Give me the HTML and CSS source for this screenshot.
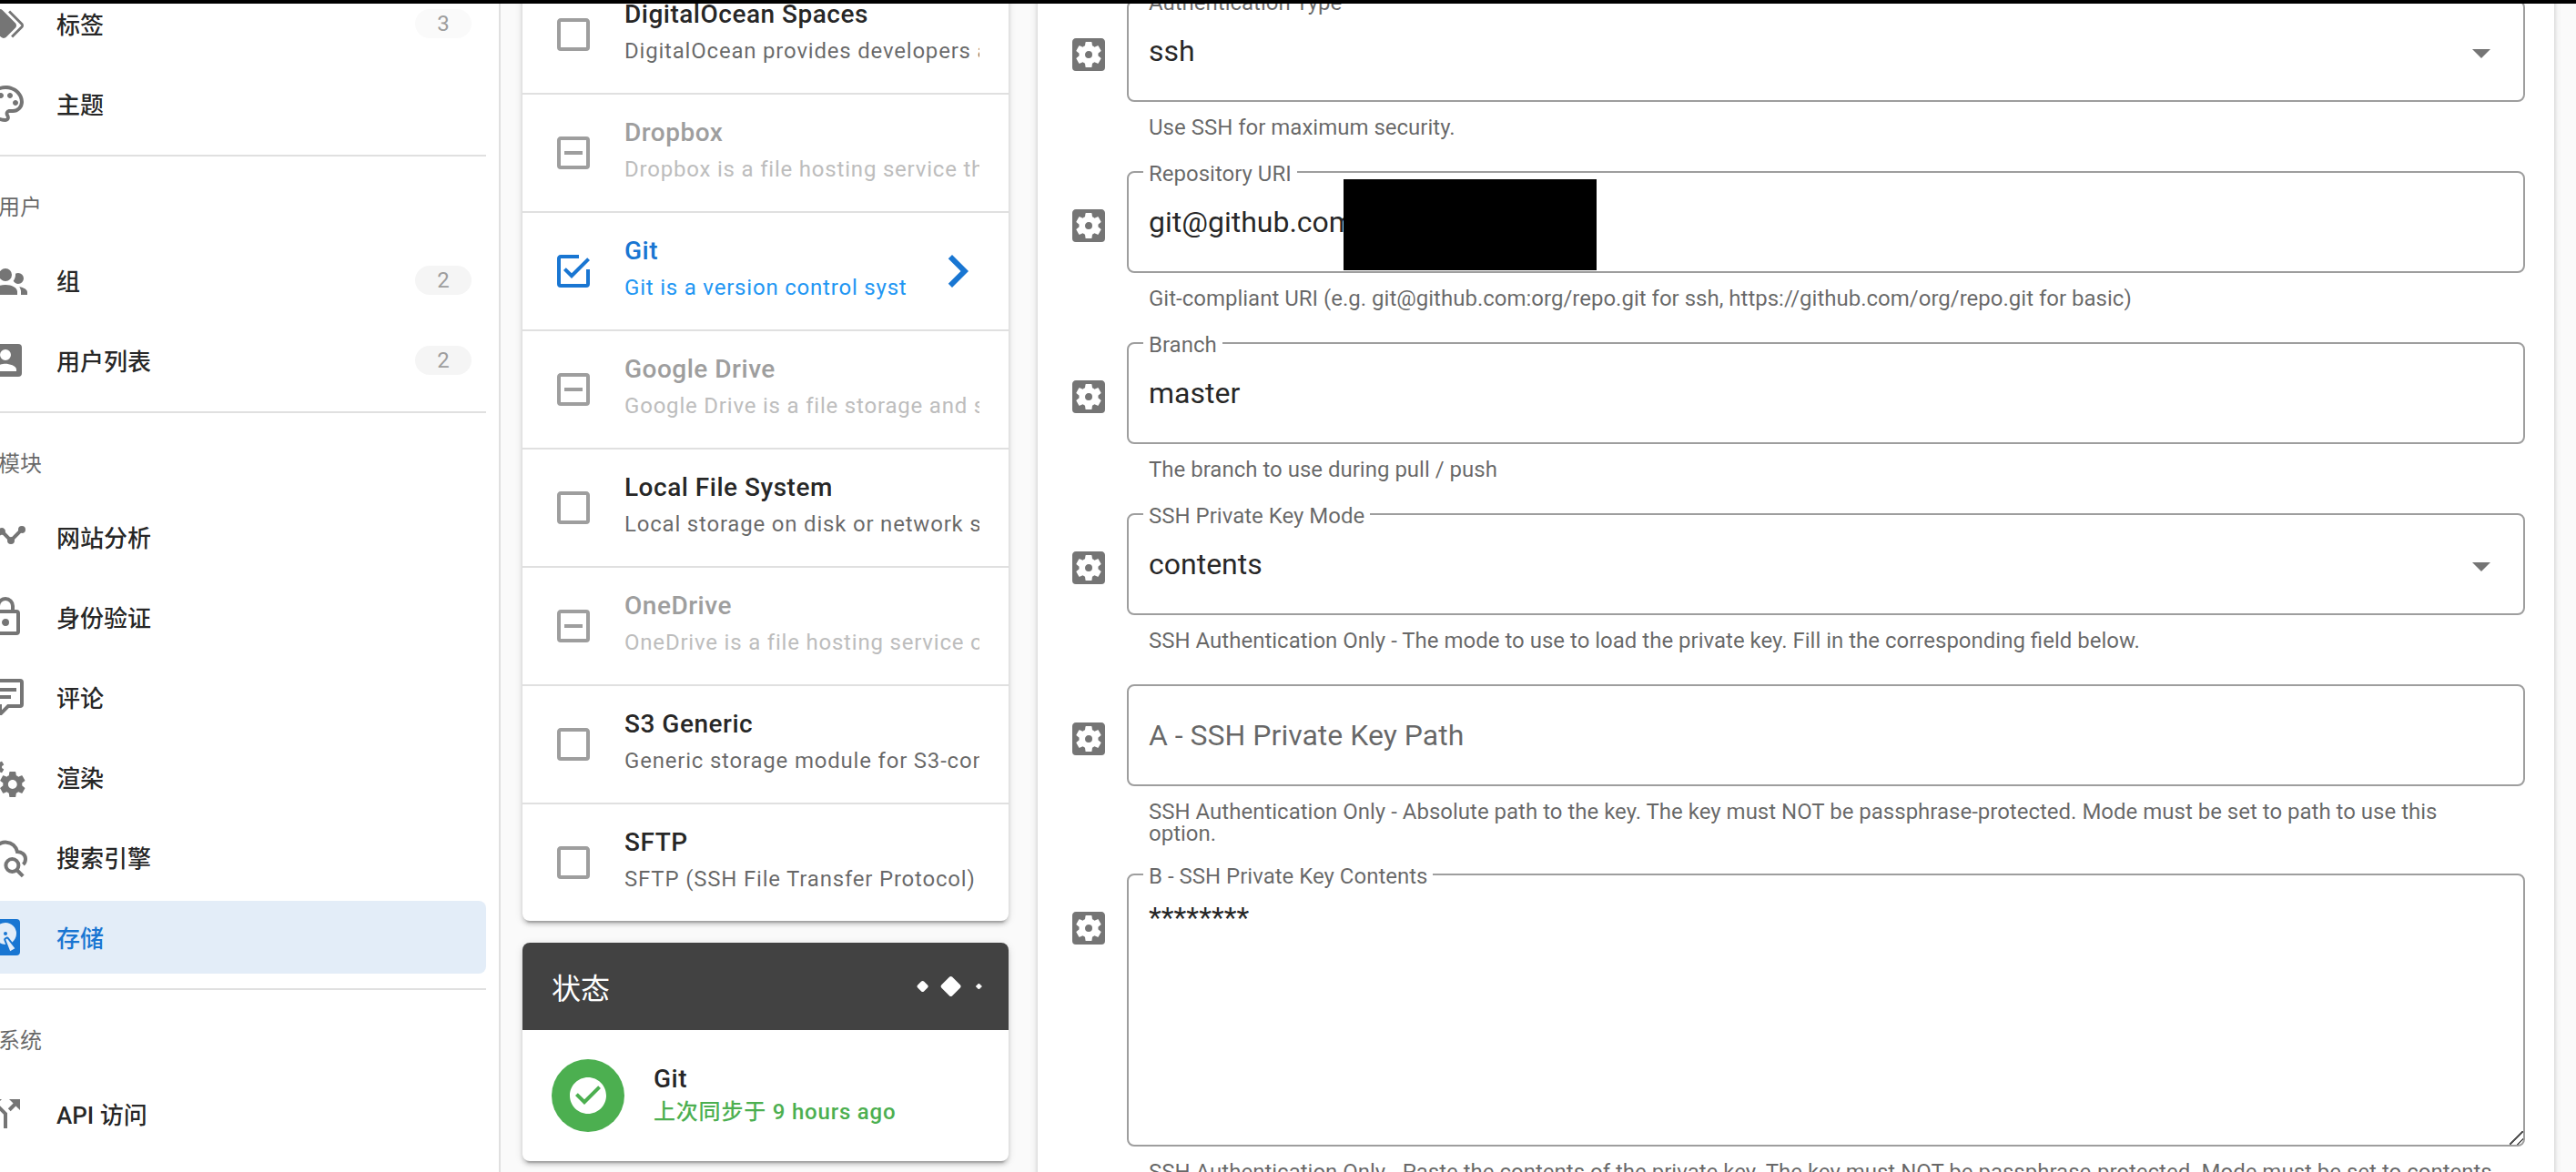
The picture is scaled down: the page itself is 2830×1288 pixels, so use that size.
FILE: index.html
```html
<!DOCTYPE html>
<html lang="zh">
<head>
<meta charset="utf-8">
<title>存储</title>
<meta name="viewport" content="width=device-width, initial-scale=1">
<link rel="stylesheet" href="styles.css">
</head>
<body>
<svg class="sprite" aria-hidden="true">
  <symbol id="i-cog-box" viewBox="0 0 24 24"><path d="M17.25,12C17.25,12.23 17.23,12.46 17.2,12.68L18.68,13.84C18.81,13.95 18.85,14.13 18.76,14.29L17.36,16.71C17.27,16.86 17.09,16.92 16.93,16.86L15.19,16.16C14.83,16.44 14.43,16.67 14,16.85L13.75,18.7C13.72,18.87 13.57,19 13.4,19H10.6C10.43,19 10.28,18.87 10.25,18.7L10,16.85C9.56,16.67 9.17,16.44 8.81,16.16L7.07,16.86C6.91,16.92 6.73,16.86 6.64,16.71L5.24,14.29C5.15,14.13 5.19,13.95 5.32,13.84L6.8,12.68C6.77,12.46 6.75,12.23 6.75,12C6.75,11.77 6.77,11.54 6.8,11.32L5.32,10.16C5.19,10.05 5.15,9.86 5.24,9.71L6.64,7.29C6.73,7.13 6.91,7.07 7.07,7.13L8.81,7.84C9.17,7.56 9.56,7.32 10,7.15L10.25,5.29C10.28,5.13 10.43,5 10.6,5H13.4C13.57,5 13.72,5.13 13.75,5.29L14,7.15C14.43,7.32 14.83,7.56 15.19,7.84L16.93,7.13C17.09,7.07 17.27,7.13 17.36,7.29L18.76,9.71C18.85,9.86 18.81,10.05 18.68,10.16L17.2,11.32C17.23,11.54 17.25,11.77 17.25,12M19,3H5C3.89,3 3,3.89 3,5V19A2,2 0 0,0 5,21H19A2,2 0 0,0 21,19V5C21,3.89 20.1,3 19,3M12,10C10.89,10 10,10.89 10,12A2,2 0 0,0 12,14A2,2 0 0,0 14,12A2,2 0 0,0 12,10Z"/></symbol>
  <symbol id="i-box" viewBox="0 0 24 24"><path d="M19,3H5C3.89,3 3,3.89 3,5V19A2,2 0 0,0 5,21H19A2,2 0 0,0 21,19V5C21,3.89 20.1,3 19,3M19,5V19H5V5H19Z"/></symbol>
  <symbol id="i-minus" viewBox="0 0 24 24"><path d="M19,19V5H5V19H19M19,3A2,2 0 0,1 21,5V19A2,2 0 0,1 19,21H5A2,2 0 0,1 3,19V5C3,3.89 3.9,3 5,3H19M17,11V13H7V11H17Z"/></symbol>
  <symbol id="i-checked" viewBox="0 0 24 24"><path d="M19,19H5V5H15V3H5C3.89,3 3,3.89 3,5V19A2,2 0 0,0 5,21H19A2,2 0 0,0 21,19V11H19M7.91,10.08L6.5,11.5L11,16L21,6L19.59,4.58L11,13.17L7.91,10.08Z"/></symbol>
  <symbol id="i-menu-down" viewBox="0 0 24 24"><path d="M7,10L12,15L17,10H7Z"/></symbol>
</svg>

<div class="progress"></div>

<div class="app">
  <nav class="sidebar">
    <ul class="nav">
      <li><a class="nav-item" href="#tags">
        <svg class="icon" viewBox="0 0 24 24"><path d="M5.5,9A1.5,1.5 0 0,0 7,7.5A1.5,1.5 0 0,0 5.5,6A1.5,1.5 0 0,0 4,7.5A1.5,1.5 0 0,0 5.5,9M17.41,11.58C17.77,11.94 18,12.44 18,13C18,13.55 17.78,14.05 17.41,14.41L12.41,19.41C12.05,19.77 11.55,20 11,20C10.45,20 9.95,19.78 9.58,19.41L2.59,12.42C2.22,12.05 2,11.55 2,11V6C2,4.89 2.89,4 4,4H9C9.55,4 10.05,4.22 10.41,4.58L17.41,11.58M13.54,5.71L14.54,4.71L21.41,11.58C21.78,11.94 22,12.45 22,13C22,13.55 21.78,14.05 21.42,14.41L16.04,19.79L15.04,18.79L20.75,13L13.54,5.71Z"/></svg>
        <span class="nav-text">标签</span><span class="chip chip-light">3</span></a></li>
      <li><a class="nav-item" href="#theme">
        <svg class="icon" viewBox="0 0 24 24"><path d="M12,22A10,10 0 0,1 2,12A10,10 0 0,1 12,2C17.5,2 22,6 22,11A6,6 0 0,1 16,17H14.2C13.9,17 13.7,17.2 13.7,17.5C13.7,17.6 13.8,17.7 13.8,17.8C14.2,18.3 14.4,18.9 14.4,19.5C14.5,20.9 13.4,22 12,22M12,4A8,8 0 0,0 4,12A8,8 0 0,0 12,20C12.3,20 12.5,19.8 12.5,19.5C12.5,19.3 12.4,19.2 12.4,19.1C12,18.6 11.8,18.1 11.8,17.5C11.8,16.1 12.9,15 14.3,15H16A4,4 0 0,0 20,11C20,7.1 16.4,4 12,4M6.5,10C7.3,10 8,10.7 8,11.5C8,12.3 7.3,13 6.5,13C5.7,13 5,12.3 5,11.5C5,10.7 5.7,10 6.5,10M9.5,6C10.3,6 11,6.7 11,7.5C11,8.3 10.3,9 9.5,9C8.7,9 8,8.3 8,7.5C8,6.7 8.7,6 9.5,6M14.5,6C15.3,6 16,6.7 16,7.5C16,8.3 15.3,9 14.5,9C13.7,9 13,8.3 13,7.5C13,6.7 13.7,6 14.5,6M17.5,10C18.3,10 19,10.7 19,11.5C19,12.3 18.3,13 17.5,13C16.7,13 16,12.3 16,11.5C16,10.7 16.7,10 17.5,10Z"/></svg>
        <span class="nav-text">主题</span></a></li>
    </ul>
    <h2 class="subheader">用户</h2>
    <ul class="nav">
      <li><a class="nav-item" href="#groups">
        <svg class="icon" viewBox="0 0 24 24"><path d="M12,5.5A3.5,3.5 0 0,1 15.5,9A3.5,3.5 0 0,1 12,12.5A3.5,3.5 0 0,1 8.5,9A3.5,3.5 0 0,1 12,5.5M5,8C5.56,8 6.08,8.15 6.53,8.42C6.38,9.85 6.8,11.27 7.66,12.38C7.16,13.34 6.16,14 5,14A3,3 0 0,1 2,11A3,3 0 0,1 5,8M19,8A3,3 0 0,1 22,11A3,3 0 0,1 19,14C17.84,14 16.84,13.34 16.34,12.38C17.2,11.27 17.62,9.85 17.47,8.42C17.92,8.15 18.44,8 19,8M5.5,18.25C5.5,16.18 8.41,14.5 12,14.5C15.59,14.5 18.5,16.18 18.5,18.25V20H5.5V18.25M0,20V18.5C0,17.11 1.89,15.94 4.45,15.6C3.86,16.28 3.5,17.22 3.5,18.25V20H0M24,20H20.5V18.25C20.5,17.22 20.14,16.28 19.55,15.6C22.11,15.94 24,17.11 24,18.5V20Z"/></svg>
        <span class="nav-text">组</span><span class="chip">2</span></a></li>
      <li><a class="nav-item" href="#users">
        <svg class="icon" viewBox="0 0 24 24"><path d="M6,17C6,15 10,13.9 12,13.9C14,13.9 18,15 18,17V18H6M15,9A3,3 0 0,1 12,12A3,3 0 0,1 9,9A3,3 0 0,1 12,6A3,3 0 0,1 15,9M3,5V19A2,2 0 0,0 5,21H19A2,2 0 0,0 21,19V5A2,2 0 0,0 19,3H5C3.89,3 3,3.9 3,5Z"/></svg>
        <span class="nav-text">用户列表</span><span class="chip">2</span></a></li>
    </ul>
    <h2 class="subheader">模块</h2>
    <ul class="nav">
      <li><a class="nav-item" href="#analytics">
        <svg class="icon" viewBox="0 0 24 24"><path d="M3,14L3.5,14.07L8.07,9.5C7.89,8.85 8.06,8.11 8.59,7.59C9.37,6.8 10.63,6.8 11.41,7.59C11.94,8.11 12.11,8.85 11.93,9.5L14.5,12.07L15,12C15.18,12 15.35,12 15.5,12.07L19.07,8.5C19,8.35 19,8.18 19,8A2,2 0 0,1 21,6A2,2 0 0,1 23,8A2,2 0 0,1 21,10C20.82,10 20.65,10 20.5,9.93L16.93,13.5C17,13.65 17,13.82 17,14A2,2 0 0,1 15,16A2,2 0 0,1 13,14L13.07,13.5L10.5,10.93C10.18,11 9.82,11 9.5,10.93L4.93,15.5L5,16A2,2 0 0,1 3,18A2,2 0 0,1 1,16A2,2 0 0,1 3,14Z"/></svg>
        <span class="nav-text">网站分析</span></a></li>
      <li><a class="nav-item" href="#auth">
        <svg class="icon" viewBox="0 0 24 24"><path d="M12,17C10.89,17 10,16.1 10,15C10,13.89 10.89,13 12,13A2,2 0 0,1 14,15A2,2 0 0,1 12,17M18,20V10H6V20H18M18,8A2,2 0 0,1 20,10V20A2,2 0 0,1 18,22H6C4.89,22 4,21.1 4,20V10C4,8.89 4.89,8 6,8H7V6A5,5 0 0,1 12,1A5,5 0 0,1 17,6V8H18M12,3A3,3 0 0,0 9,6V8H15V6A3,3 0 0,0 12,3Z"/></svg>
        <span class="nav-text">身份验证</span></a></li>
      <li><a class="nav-item" href="#comments">
        <svg class="icon" viewBox="0 0 24 24"><path d="M9,22A1,1 0 0,1 8,21V18H4A2,2 0 0,1 2,16V4C2,2.89 2.9,2 4,2H20A2,2 0 0,1 22,4V16A2,2 0 0,1 20,18H13.9L10.2,21.71C10,21.9 9.75,22 9.5,22V22H9M10,16V19.08L13.08,16H20V4H4V16H10M6,7H18V9H6V7M6,11H15V13H6V11Z"/></svg>
        <span class="nav-text">评论</span></a></li>
      <li><a class="nav-item" href="#rendering">
        <svg class="icon" viewBox="0 0 24 24"><path d="M15.9,18.45C17.25,18.45 18.35,17.35 18.35,16C18.35,14.65 17.25,13.55 15.9,13.55C14.54,13.55 13.45,14.65 13.45,16C13.45,17.35 14.54,18.45 15.9,18.45M21.1,16.68L22.58,17.84C22.71,17.95 22.75,18.13 22.66,18.29L21.26,20.71C21.17,20.86 21,20.92 20.83,20.86L19.09,20.16C18.73,20.44 18.33,20.67 17.91,20.85L17.64,22.7C17.62,22.87 17.47,23 17.3,23H14.5C14.32,23 14.18,22.87 14.15,22.7L13.89,20.85C13.46,20.67 13.07,20.44 12.71,20.16L10.96,20.86C10.81,20.92 10.62,20.86 10.54,20.71L9.14,18.29C9.05,18.13 9.09,17.95 9.22,17.84L10.7,16.68L10.65,16L10.7,15.31L9.22,14.16C9.09,14.05 9.05,13.86 9.14,13.71L10.54,11.29C10.62,11.13 10.81,11.07 10.96,11.13L12.71,11.84C13.07,11.56 13.46,11.32 13.89,11.15L14.15,9.29C14.18,9.13 14.32,9 14.5,9H17.3C17.47,9 17.62,9.13 17.64,9.29L17.91,11.15C18.33,11.32 18.73,11.56 19.09,11.84L20.83,11.13C21,11.07 21.17,11.13 21.26,11.29L22.66,13.71C22.75,13.86 22.71,14.05 22.58,14.16L21.1,15.31L21.15,16L21.1,16.68M6.69,8.07C7.56,8.07 8.26,7.37 8.26,6.5C8.26,5.63 7.56,4.92 6.69,4.92A1.58,1.58 0 0,0 5.11,6.5C5.11,7.37 5.82,8.07 6.69,8.07M10.03,6.94L11,7.68C11.07,7.75 11.09,7.87 11.03,7.97L10.13,9.53C10.08,9.63 9.96,9.67 9.86,9.63L8.74,9.18L8,9.62L7.81,10.81C7.79,10.92 7.7,11 7.59,11H5.79C5.67,11 5.58,10.92 5.56,10.81L5.4,9.62L4.64,9.18L3.52,9.63C3.41,9.67 3.3,9.63 3.24,9.53L2.34,7.97C2.28,7.87 2.31,7.75 2.39,7.68L3.34,6.94L3.31,6.5L3.34,6.06L2.39,5.32C2.31,5.25 2.28,5.13 2.34,5.03L3.24,3.47C3.3,3.37 3.41,3.33 3.52,3.37L4.63,3.82L5.4,3.38L5.56,2.19C5.58,2.08 5.67,2 5.79,2H7.59C7.7,2 7.79,2.08 7.81,2.19L8,3.38L8.74,3.82L9.86,3.37C9.96,3.33 10.08,3.37 10.13,3.47L11.03,5.03C11.09,5.13 11.07,5.25 11,5.32L10.03,6.06L10.06,6.5L10.03,6.94Z"/></svg>
        <span class="nav-text">渲染</span></a></li>
      <li><a class="nav-item" href="#search">
        <svg class="icon icon-line" viewBox="0 0 24 24"><path d="M9,17H6A4.5,4.5 0 0 1 5.9,8A6.6,6.6 0 0 1 18.5,9C21,9 23,10.8 23,13C23,14.3 22.5,15.3 21.7,16"/><circle cx="15.7" cy="16.5" r="3.5"/><path d="M18.2,19L21.6,22.4"/></svg>
        <span class="nav-text">搜索引擎</span></a></li>
      <li><a class="nav-item nav-item-active" href="#storage" aria-current="page">
        <svg class="icon" viewBox="0 0 24 24"><path d="M6,2H18A2,2 0 0,1 20,4V20A2,2 0 0,1 18,22H6A2,2 0 0,1 4,20V4A2,2 0 0,1 6,2M12,4A6,6 0 0,0 6,10C6,13.31 8.69,16 12.1,16L11.22,13.77C10.95,13.29 11.11,12.68 11.59,12.4L12.45,11.9C12.93,11.63 13.54,11.79 13.82,12.27L15.74,14.69C17.12,13.59 18,11.9 18,10A6,6 0 0,0 12,4M12,9A1,1 0 0,1 13,10A1,1 0 0,1 12,11A1,1 0 0,1 11,10A1,1 0 0,1 12,9M7,18A1,1 0 0,0 6,19A1,1 0 0,0 7,20A1,1 0 0,0 8,19A1,1 0 0,0 7,18M12.09,13.27L14.58,19.58L17.17,18.08L12.95,12.77L12.09,13.27Z"/></svg>
        <span class="nav-text">存储</span></a></li>
    </ul>
    <h2 class="subheader">系统</h2>
    <ul class="nav">
      <li><a class="nav-item" href="#api">
        <svg class="icon" viewBox="0 0 24 24"><path d="M14,4L16.29,6.29L13.41,9.17L14.83,10.59L17.71,7.71L20,10V4M10,4H4V10L6.29,7.71L11,12.41V20H13V11.59L7.71,6.29"/></svg>
        <span class="nav-text">API 访问</span></a></li>
    </ul>
  </nav>

  <main class="content">
    <div class="column">
      <ul class="card targets">
        <li class="target">
          <span class="check"><input type="checkbox" id="t-do"><svg class="icon"><use href="#i-box"/></svg></span>
          <div class="target-text"><label class="target-title" for="t-do">DigitalOcean Spaces</label><p class="target-desc">DigitalOcean provides developers and businesses a reliable, easy-to-use cloud computing platform.</p></div>
        </li>
        <li class="target target-disabled">
          <span class="check"><input type="checkbox" id="t-dropbox" disabled><svg class="icon"><use href="#i-minus"/></svg></span>
          <div class="target-text"><label class="target-title" for="t-dropbox">Dropbox</label><p class="target-desc">Dropbox is a file hosting service that offers cloud storage and file synchronization.</p></div>
        </li>
        <li class="target target-active">
          <span class="check"><input type="checkbox" id="t-git" checked><svg class="icon"><use href="#i-checked"/></svg></span>
          <div class="target-text"><label class="target-title" for="t-git">Git</label><p class="target-desc">Git is a version control system for tracking changes in computer files.</p></div>
          <span class="chevron"><svg viewBox="0 0 24 24"><path d="M8.59,16.58L13.17,12L8.59,7.41L10,6L16,12L10,18L8.59,16.58Z"/></svg></span>
        </li>
        <li class="target target-disabled">
          <span class="check"><input type="checkbox" id="t-gdrive" disabled><svg class="icon"><use href="#i-minus"/></svg></span>
          <div class="target-text"><label class="target-title" for="t-gdrive">Google Drive</label><p class="target-desc">Google Drive is a file storage and synchronization service developed by Google.</p></div>
        </li>
        <li class="target">
          <span class="check"><input type="checkbox" id="t-local"><svg class="icon"><use href="#i-box"/></svg></span>
          <div class="target-text"><label class="target-title" for="t-local">Local File System</label><p class="target-desc">Local storage on disk or network shares.</p></div>
        </li>
        <li class="target target-disabled">
          <span class="check"><input type="checkbox" id="t-onedrive" disabled><svg class="icon"><use href="#i-minus"/></svg></span>
          <div class="target-text"><label class="target-title" for="t-onedrive">OneDrive</label><p class="target-desc">OneDrive is a file hosting service operated by Microsoft.</p></div>
        </li>
        <li class="target">
          <span class="check"><input type="checkbox" id="t-s3"><svg class="icon"><use href="#i-box"/></svg></span>
          <div class="target-text"><label class="target-title" for="t-s3">S3 Generic</label><p class="target-desc">Generic storage module for S3-compatible services.</p></div>
        </li>
        <li class="target">
          <span class="check"><input type="checkbox" id="t-sftp"><svg class="icon"><use href="#i-box"/></svg></span>
          <div class="target-text"><label class="target-title" for="t-sftp">SFTP</label><p class="target-desc">SFTP (SSH File Transfer Protocol)</p></div>
        </li>
      </ul>

      <section class="card">
        <header class="status-header">
          <h2 class="status-heading">状态</h2>
          <svg class="spinner" viewBox="0 0 72 24"><g stroke-width="4" stroke-linejoin="round"><path d="M9.6,8L13.6,12L9.6,16L5.6,12Z"/><path d="M40.6,3L49.6,12L40.6,21L31.6,12Z"/></g><path d="M71.4,9L74.4,12L71.4,15L68.4,12Z"/></svg>
        </header>
        <div class="status-row">
          <span class="avatar"><svg class="icon" viewBox="0 0 24 24"><path d="M12 2C6.5 2 2 6.5 2 12S6.5 22 12 22 22 17.5 22 12 17.5 2 12 2M10 17L5 12L6.41 10.59L10 14.17L17.59 6.58L19 8L10 17Z"/></svg></span>
          <div><h3 class="status-title">Git</h3><p class="status-desc">上次同步于 9 hours ago</p></div>
        </div>
      </section>
    </div>

    <form class="card form">
      <div class="row">
        <svg class="icon row-icon"><use href="#i-cog-box"/></svg>
        <div class="row-main">
          <div class="field"><label class="field-label" for="f-auth">Authentication Type</label>
            <select class="control" id="f-auth"><option>ssh</option><option>basic</option></select>
            <svg class="icon arrow"><use href="#i-menu-down"/></svg></div>
          <p class="hint">Use SSH for maximum security.</p>
        </div>
      </div>
      <div class="row">
        <svg class="icon row-icon"><use href="#i-cog-box"/></svg>
        <div class="row-main">
          <div class="field"><label class="field-label" for="f-uri">Repository URI</label>
            <input class="control" id="f-uri" type="text" value="git@github.com">
            <span class="redaction"></span></div>
          <p class="hint">Git-compliant URI (e.g. git@github.com:org/repo.git for ssh, https://github.com/org/repo.git for basic)</p>
        </div>
      </div>
      <div class="row">
        <svg class="icon row-icon"><use href="#i-cog-box"/></svg>
        <div class="row-main">
          <div class="field"><label class="field-label" for="f-branch">Branch</label>
            <input class="control" id="f-branch" type="text" value="master"></div>
          <p class="hint">The branch to use during pull / push</p>
        </div>
      </div>
      <div class="row">
        <svg class="icon row-icon"><use href="#i-cog-box"/></svg>
        <div class="row-main">
          <div class="field"><label class="field-label" for="f-mode">SSH Private Key Mode</label>
            <select class="control" id="f-mode"><option>contents</option><option>path</option></select>
            <svg class="icon arrow"><use href="#i-menu-down"/></svg></div>
          <p class="hint">SSH Authentication Only - The mode to use to load the private key. Fill in the corresponding field below.</p>
        </div>
      </div>
      <div class="row">
        <svg class="icon row-icon"><use href="#i-cog-box"/></svg>
        <div class="row-main">
          <div class="field"><label class="field-label field-label-resting" for="f-path">A - SSH Private Key Path</label>
            <input class="control" id="f-path" type="text"></div>
          <p class="hint">SSH Authentication Only - Absolute path to the key. The key must NOT be passphrase-protected. Mode must be set to path to use this option.</p>
        </div>
      </div>
      <div class="row">
        <svg class="icon row-icon"><use href="#i-cog-box"/></svg>
        <div class="row-main">
          <div class="field field-tall"><label class="field-label" for="f-key">B - SSH Private Key Contents</label>
            <textarea class="control control-area" id="f-key">********</textarea></div>
          <p class="hint">SSH Authentication Only - Paste the contents of the private key. The key must NOT be passphrase-protected. Mode must be set to contents to use this option.</p>
        </div>
      </div>
    </form>
  </main>
</div>
</body>
</html>
```
FILE: styles.css
```css
* {
  box-sizing: border-box;
}

:root {
  --text: rgba(0, 0, 0, 0.87);
  --muted: rgba(0, 0, 0, 0.6);
  --icon: #757575;
  --line: #e0e0e0;
  --outline: #9e9e9e;
  --primary: #1976d2;
}

body {
  margin: 0;
  overflow: hidden;
  background: #fafafa;
  color: var(--text);
  font-family: Roboto, "Noto Sans CJK SC", sans-serif;
  font-size: 24px;
}

ul,
h2,
h3,
p {
  margin: 0;
  padding: 0;
  list-style: none;
  font-weight: 400;
}

.sprite {
  display: none;
}

.icon {
  flex: none;
  display: block;
  width: 48px;
  height: 48px;
  fill: currentColor;
}

.icon-line {
  fill: none;
  stroke: currentColor;
  stroke-width: 2;
}

.progress {
  position: fixed;
  inset: 0 0 auto;
  z-index: 2;
  height: 4px;
  background: #000;
}

.app {
  display: flex;
  height: 100vh;
  overflow: hidden;
}

/* Sidebar, scrolled slightly down and to the right */
.sidebar {
  flex: none;
  width: 550px;
  padding-right: 14px;
  overflow: hidden;
  border-right: 2px solid var(--line);
  background: #fff;
}

.nav {
  display: flex;
  flex-direction: column;
  gap: 8px;
  margin-left: -34px;
}

.nav:first-child {
  margin-top: -14px;
}

.nav-item {
  display: flex;
  align-items: center;
  gap: 32px;
  height: 80px;
  padding: 0 16px;
  border-radius: 8px;
  color: var(--icon);
  text-decoration: none;
}

.nav-text {
  flex: 1;
  padding-bottom: 2px;
  color: var(--text);
  font-size: 26px;
  font-weight: 500;
}

.nav-item-active {
  background: #e3edf8;
  color: var(--primary);
}

.nav-item-active .nav-text {
  color: inherit;
}

.chip {
  width: 62px;
  border-radius: 16px;
  background: #f5f5f5;
  color: #9e9e9e;
  line-height: 32px;
  text-align: center;
}

.chip-light {
  background: #fafafa;
}

.subheader {
  margin: 16px 0 0 -2px;
  padding-top: 16px;
  border-top: 2px solid var(--line);
  color: var(--muted);
  font-size: 24px;
  line-height: 80px;
}

/* Main area */
.content {
  flex: 1;
  display: grid;
  grid-template-columns: minmax(320px, 534px) minmax(0, 1fr);
  gap: 32px;
  align-items: start;
  min-width: 0;
  padding: 0 24px;
}

.column {
  display: grid;
  grid-template-columns: minmax(0, 1fr);
  gap: 24px;
  margin-top: -26px;
}

.card {
  border-radius: 8px;
  background: #fff;
  box-shadow: 0 6px 2px -4px rgba(0, 0, 0, 0.2), 0 4px 4px rgba(0, 0, 0, 0.14), 0 2px 10px rgba(0, 0, 0, 0.12);
}

.target {
  display: flex;
  align-items: center;
  gap: 32px;
  height: 128px;
  padding: 0 32px;
}

.target + .target {
  height: 130px;
  border-top: 2px solid var(--line);
}

.check {
  flex: none;
  display: grid;
  color: #9e9e9e;
}

.check > * {
  grid-area: 1 / 1;
}

.check input {
  margin: 0;
  appearance: none;
}

.check .icon {
  pointer-events: none;
}

.target-text {
  flex: 1;
  min-width: 0;
  padding-bottom: 4px;
  overflow: hidden;
  line-height: 40px;
  white-space: nowrap;
}

.target-title {
  display: block;
  font-size: 28px;
  font-weight: 500;
  letter-spacing: 0.0179em;
}

.target-desc {
  color: var(--muted);
  letter-spacing: 0.0333em;
}

.target-disabled .target-title {
  color: #9e9e9e;
}

.target-disabled .target-desc {
  color: #bdbdbd;
}

.target-active .check,
.target-active .target-title {
  color: var(--primary);
}

.target-active .target-desc {
  color: #2196f3;
}

.chevron {
  flex: none;
  display: flex;
  justify-content: center;
  width: 48px;
}

.chevron svg {
  flex: none;
  width: 72px;
  height: 72px;
  fill: var(--primary);
}

.status-header {
  display: flex;
  align-items: center;
  justify-content: space-between;
  height: 96px;
  padding: 0 32px;
  border-radius: 8px 8px 0 0;
  background: #424242;
  color: #fff;
}

.status-heading {
  font-size: 32px;
}

.spinner {
  width: 72px;
  height: 24px;
  overflow: visible;
  fill: #fff;
  stroke: #fff;
}

.status-row {
  display: flex;
  align-items: center;
  gap: 32px;
  height: 144px;
  padding: 0 32px;
  line-height: 36px;
}

.avatar {
  flex: none;
  display: grid;
  place-items: center;
  width: 80px;
  height: 80px;
  border-radius: 50%;
  background: #4caf50;
  color: #fff;
}

.status-title {
  font-size: 28px;
  font-weight: 500;
  letter-spacing: 0.0179em;
}

.status-desc {
  color: #4caf50;
  font-weight: 500;
  letter-spacing: 0.0333em;
}

/* Configuration form */
.form {
  display: grid;
  gap: 32px;
  margin-top: -32px;
  padding: 32px;
}

.row {
  display: flex;
  gap: 18px;
}

.row-icon {
  margin-top: 36px;
  color: var(--icon);
}

.row-main {
  flex: 1;
  min-width: 0;
}

.field {
  position: relative;
  height: 112px;
  border: 2px solid var(--outline);
  border-radius: 8px;
}

.field-tall {
  height: 300px;
}

.field-label {
  position: absolute;
  top: -11px;
  left: 16px;
  padding: 0 6px;
  background: #fff;
  color: var(--muted);
  line-height: 24px;
}

.field-label-resting {
  top: 34px;
  font-size: 32px;
  line-height: 40px;
}

.control {
  display: block;
  width: 100%;
  height: 100%;
  margin: 0;
  padding: 0 22px;
  border: 0;
  outline: 0;
  border-radius: 6px;
  appearance: none;
  background: transparent;
  color: var(--text);
  font: inherit;
  font-size: 32px;
}

.control-area {
  padding-top: 18px;
  line-height: 56px;
  resize: vertical;
}

.control-area::-webkit-resizer {
  background: linear-gradient(135deg, transparent 46%, #555 46% 54%, transparent 54% 75%, #555 75% 83%, transparent 83%);
}

.arrow {
  position: absolute;
  top: 32px;
  right: 22px;
  color: var(--icon);
  pointer-events: none;
}

.redaction {
  position: absolute;
  top: 7px;
  left: 236px;
  width: 278px;
  height: 100px;
  background: #000;
}

.hint {
  min-height: 28px;
  margin: 16px 24px 0;
  color: var(--muted);
  line-height: 24px;
}
```
